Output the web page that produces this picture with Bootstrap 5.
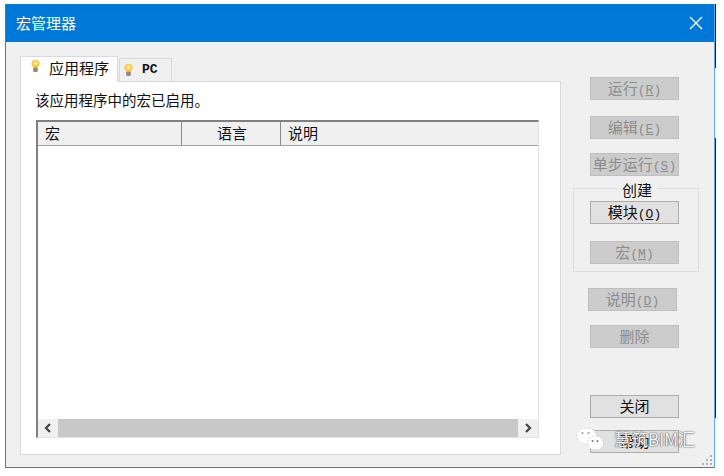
<!DOCTYPE html>
<html lang="zh">
<head>
<meta charset="utf-8">
<title>宏管理器</title>
<link rel="stylesheet" href="https://cdn.jsdelivr.net/npm/bootstrap@5.3.0/dist/css/bootstrap.min.css">
<style>
html,body{height:100%;background:#fff;margin:0;overflow:hidden}
body{font-family:"Noto Sans CJK SC","Liberation Sans",sans-serif;color:#111}
.win{width:710px;height:464px;margin:4px 0 0 5px;background:#f0f0f0;border:1px solid #1f86dc;border-top:0;border-right:1px solid #5aaaf0;position:relative}
.win-edge{position:absolute;top:0;bottom:0;right:-2px;width:1px;background:linear-gradient(to bottom,#1a1a2a 0,#1a1a2a 64px,#fff 64px,#fff 134px,#1a1a2a 134px,#1a1a2a 414px,#fff 414px)}
.ttl{height:38px;background:#0078d7;color:#fff;font-size:15px;padding-left:10px}
.ttl svg{margin-right:11px}
.main{padding:13px 0 0 14px}
.leftcol{width:541px}
.tabrow{height:26px;align-items:flex-end}
.tb{background:#f0f0f0;border:1px solid #d9d9d9;border-bottom:0;height:23px;width:53px;margin-left:1px;padding-left:3px}
.tb.on{background:#fff;height:26px;width:98px;margin-left:0;font-size:15px;padding-left:9px;gap:8px;position:relative;top:1px;padding-bottom:2px}
.tb.on svg{margin-bottom:5px}
.tb.off{gap:8px;font-family:"Liberation Mono",monospace;font-weight:700;font-size:13px}
.tb.off svg{margin-top:1px}
.panel{background:#fff;border:1px solid #d9d9d9;height:374px;padding:8px 21px 0 15px}
.msg{font-size:14.5px;line-height:20px;margin:0 0 10px -1px}
.lst{height:318px;border:1px solid #a0a0a0;border-left:2px solid #808080;border-top:2px solid #808080;border-right-color:#e3e3e3;border-bottom-color:#e3e3e3}
.hd{height:24px;background:#f0f0f0;border-bottom:1px solid #a0a0a0;font-size:15px}
.hc{border-right:1px solid #8a8a8a;padding-left:7px;line-height:22px}
.c1{width:144px}.c2{width:99px;text-align:center;padding-left:2px}.c3{flex:1;border-right:0;padding-left:7px}
.bodyarea{flex:1}
.sb{height:18px;background:#c8c8c8}
.sb-b{width:20px;background:#f0f0f0}
.side{width:126px;margin-left:12px;padding-top:22px}
.wb{display:block;width:89px;height:23px;padding:0 0 2px;border-radius:0;border:1px solid #adadad;background:#e1e1e1;color:#111;font-size:15px;line-height:20px;margin-left:17px;white-space:nowrap}
.wb:disabled,.wb.btn:disabled{background:#cccccc;border-color:#bfbfbf;color:#8c8c8c;opacity:1}
.wb u{text-underline-offset:1px}
.lat{font-family:"Liberation Mono",monospace;font-size:13px}
.gap16{margin-top:16px}.gap14{margin-top:14px}.gap17{margin-top:17px}.gap47{margin-top:47px}.gap12{margin-top:12px}
.grp{border:1px solid #dcdcdc;height:84px;margin-top:12px;position:relative;padding-top:12px}
.grp .wb{margin-left:16px}
.grp-t{position:absolute;top:-8px;left:43px;background:#f0f0f0;padding:0 5px;font-size:15px;line-height:18px;color:#111}
.wb.shift{margin-left:15px}
.grip{position:absolute;right:2px;bottom:2px}
.wm{position:absolute;left:569px;top:422px;gap:8px;color:#f4f4f4;font-size:17px;text-shadow:0 0 1px #444,0 0 2px #666;line-height:26px}
</style>
</head>
<body>
<div class="win">
  <div class="win-edge"></div>
  <div class="ttl d-flex align-items-center justify-content-between">
    <span>宏管理器</span>
    <svg width="14" height="14" viewBox="0 0 14 14"><path d="M1 1L13 13M13 1L1 13" stroke="#fff" stroke-width="1.4" fill="none"/></svg>
  </div>
  <div class="main d-flex">
    <div class="leftcol">
      <div class="tabrow d-flex">
        <div class="tb on d-flex align-items-center">
          <svg width="11" height="15" viewBox="0 0 12 16"><circle cx="6" cy="5" r="4.5" fill="#ffc83d"/><circle cx="6" cy="4.5" r="2.2" fill="#ffe9a8"/><rect x="3.5" y="9" width="5" height="5" rx="1" fill="#8c8c8c"/></svg>
          <span>应用程序</span>
        </div>
        <div class="tb off d-flex align-items-center">
          <svg width="11" height="15" viewBox="0 0 12 16"><circle cx="6" cy="5" r="4.5" fill="#ffc83d"/><circle cx="6" cy="4.5" r="2.2" fill="#ffe9a8"/><rect x="3.5" y="9" width="5" height="5" rx="1" fill="#8c8c8c"/></svg>
          <span>PC</span>
        </div>
      </div>
      <div class="panel">
        <div class="msg">该应用程序中的宏已启用。</div>
        <div class="lst d-flex flex-column">
          <div class="hd d-flex">
            <div class="hc c1">宏</div><div class="hc c2">语言</div><div class="hc c3">说明</div>
          </div>
          <div class="bodyarea"></div>
          <div class="sb d-flex justify-content-between">
            <div class="sb-b d-flex align-items-center justify-content-center"><svg width="8" height="10" viewBox="0 0 8 10"><path d="M6 1L2 5L6 9" stroke="#444" stroke-width="2.2" fill="none"/></svg></div>
            <div class="sb-b d-flex align-items-center justify-content-center"><svg width="8" height="10" viewBox="0 0 8 10"><path d="M2 1L6 5L2 9" stroke="#444" stroke-width="2.2" fill="none"/></svg></div>
          </div>
        </div>
      </div>
    </div>
    <div class="side">
      <button class="btn wb" disabled>运行<span class="lat">(<u>R</u>)</span></button>
      <button class="btn wb gap16" disabled>编辑<span class="lat">(<u>E</u>)</span></button>
      <button class="btn wb gap14" disabled>单步运行<span class="lat">(<u>S</u>)</span></button>
      <div class="grp">
        <div class="grp-t">创建</div>
        <button class="btn wb">模块<span class="lat">(<u>O</u>)</span></button>
        <button class="btn wb gap17" disabled>宏<span class="lat">(<u>M</u>)</span></button>
      </div>
      <button class="btn wb shift gap16" disabled>说明<span class="lat">(<u>D</u>)</span></button>
      <button class="btn wb gap14" disabled>删除</button>
      <button class="btn wb gap47">关闭</button>
      <button class="btn wb gap12">帮助</button>
    </div>
  </div>
  <svg class="grip" width="10" height="10" viewBox="0 0 10 10" fill="#b0b0b0"><rect x="8" y="0" width="2" height="2"/><rect x="4" y="4" width="2" height="2"/><rect x="8" y="4" width="2" height="2"/><rect x="0" y="8" width="2" height="2"/><rect x="4" y="8" width="2" height="2"/><rect x="8" y="8" width="2" height="2"/></svg>
  <div class="wm d-flex align-items-center">
    <svg width="31" height="26" viewBox="0 0 30 26"><ellipse cx="11" cy="10" rx="10" ry="8" fill="#fff" stroke="#bbb" stroke-width=".7" stroke-dasharray="2 2"/><ellipse cx="20" cy="17" rx="8" ry="7" fill="#fff" stroke="#bbb" stroke-width=".7" stroke-dasharray="2 2"/><circle cx="7" cy="7" r="1" fill="#999"/><circle cx="13" cy="7" r="1" fill="#999"/><circle cx="17" cy="15" r="1" fill="#777"/><circle cx="22" cy="15" r="1" fill="#777"/></svg>
    <span>慧筑BIM汇</span>
  </div>
</div>
</body>
</html>
